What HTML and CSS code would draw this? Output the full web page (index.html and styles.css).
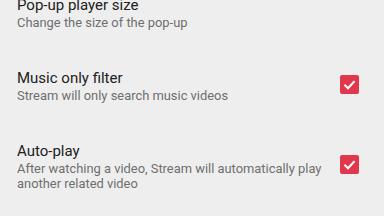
FILE: index.html
```html
<!DOCTYPE html>
<html lang="en">
<head>
  <meta charset="UTF-8">
  <title>Settings</title>
  <link rel="stylesheet" href="styles.css">
</head>
<body>
  <div class="prefs">
    <div class="pref">
      <div class="pref-text">
        <div class="pref-title">Pop-up player size</div>
        <div class="pref-summary">Change the size of the pop-up</div>
      </div>
    </div>
    <div class="pref">
      <div class="pref-text">
        <div class="pref-title">Music only filter</div>
        <div class="pref-summary">Stream will only search music videos</div>
      </div>
      <span class="check">
        <svg viewBox="0 0 18 18" width="18" height="18"><path d="M4.2 9.3 L7.6 12.5 L13.8 5.8" fill="none" stroke="#fff" stroke-width="2"/></svg>
      </span>
    </div>
    <div class="pref">
      <div class="pref-text">
        <div class="pref-title">Auto-play</div>
        <div class="pref-summary">After watching a video, Stream will automatically play another related video</div>
      </div>
      <span class="check">
        <svg viewBox="0 0 18 18" width="18" height="18"><path d="M4.2 9.3 L7.6 12.5 L13.8 5.8" fill="none" stroke="#fff" stroke-width="2"/></svg>
      </span>
    </div>
  </div>
</body>
</html>
```

FILE: styles.css
```css
body {
  margin: 0;
  background: #eeeeee;
  font-family: Roboto, "Noto Sans", sans-serif;
  overflow: hidden;
}

.prefs {
  margin-top: -24px;
}

.pref {
  display: flex;
  align-items: center;
  padding: 19px 25px 19px 17px;
}

.pref-text {
  flex: 1;
  min-width: 0;
  padding-right: 14px;
}

.pref-title {
  font-size: 15px;
  line-height: 20px;
  color: #212121;
}

.pref-summary {
  font-size: 12.9px;
  line-height: 15px;
  color: #6e6e6e;
}

.check {
  width: 19px;
  height: 19px;
  border-radius: 2px;
  background: #e2364c;
  display: flex;
  flex-shrink: 0;
  margin-bottom: 3px;
}

.check svg {
  width: 19px;
  height: 19px;
}
```
